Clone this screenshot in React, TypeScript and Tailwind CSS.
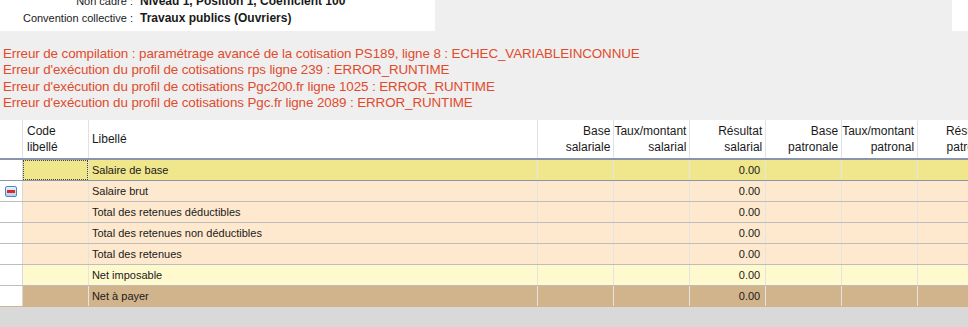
import React from 'react';

type Row = { label: string; bg: string; line: string; value: string };

const rows: Row[] = [
  { label: 'Salaire de base', bg: 'bg-[#f0e68c]', line: 'border-[#8a94ab]', value: '0.00' },
  { label: 'Salaire brut', bg: 'bg-[#fee9cf]', line: 'border-[#bdbdbd]', value: '0.00' },
  { label: 'Total des retenues déductibles', bg: 'bg-[#fee9cf]', line: 'border-[#bdbdbd]', value: '0.00' },
  { label: 'Total des retenues non déductibles', bg: 'bg-[#fee9cf]', line: 'border-[#bdbdbd]', value: '0.00' },
  { label: 'Total des retenues', bg: 'bg-[#fee9cf]', line: 'border-[#bdbdbd]', value: '0.00' },
  { label: 'Net imposable', bg: 'bg-[#fffacd]', line: 'border-[#bdbdbd]', value: '0.00' },
  { label: 'Net à payer', bg: 'bg-[#d2b48c]', line: 'border-[#d2b48c]', value: '0.00' },
];

const errors = [
  'Erreur de compilation : paramétrage avancé de la cotisation PS189, ligne 8 : ECHEC_VARIABLEINCONNUE',
  "Erreur d'exécution du profil de cotisations rps ligne 239 : ERROR_RUNTIME",
  "Erreur d'exécution du profil de cotisations Pgc200.fr ligne 1025 : ERROR_RUNTIME",
  "Erreur d'exécution du profil de cotisations Pgc.fr ligne 2089 : ERROR_RUNTIME",
];

const numHeaders = [
  ['Base', 'salariale'],
  ['Taux/montant', 'salarial'],
  ['Résultat', 'salarial'],
  ['Base', 'patronale'],
  ['Taux/montant', 'patronal'],
  ['Résultat', 'patronal'],
];

function MinusIcon() {
  return (
    <div className="w-[12px] h-[11px] rounded-[2px] border border-[#4f86c9] bg-gradient-to-b from-[#e6f1fc] to-[#b4d1f0] flex items-center justify-center">
      <div className="w-[8px] h-[3px] bg-[#d62b2b]" />
    </div>
  );
}

export default function App() {
  return (
    <div className="w-[968px] h-[327px] overflow-hidden bg-[#efefef] font-['Liberation_Sans',Arial,sans-serif] text-[#1a1a1a]">
      {/* identity panel */}
      <div className="flex justify-between h-[31px]">
        <div className="w-[435px] bg-white overflow-hidden">
          <div className="-mt-[7px] grid grid-cols-[133px_1fr] gap-x-[7px] leading-[17px]">
            <span className="text-right text-[11px]">Non cadre :</span>
            <span className="font-bold text-[12px]">Niveau 1, Position 1, Coefficient 100</span>
            <span className="text-right text-[11px]">Convention collective :</span>
            <span className="font-bold text-[12px]">Travaux publics (Ouvriers)</span>
          </div>
        </div>
        <div className="w-[16px] bg-white" />
      </div>

      {/* errors */}
      <div className="pt-[15px] pl-[3px] text-[13.4px] leading-[16.3px] text-[#e04b2d] tracking-[-0.1px]">
        {errors.map((e) => (
          <div key={e}>{e}</div>
        ))}
      </div>

      {/* grid */}
      <div className="mt-[9px] w-[994px] text-[11px]">
        <div className="flex h-[40px] bg-white border-b-2 border-[#8a94ab] text-[12px] leading-[16px]">
          <div className="w-[23px] border-r border-[#e2e2e2]" />
          <div className="w-[66px] border-r border-[#e2e2e2] pl-[4px] pt-[3px]">
            <div>Code</div>
            <div>libellé</div>
          </div>
          <div className="w-[450px] border-r border-[#e2e2e2] pl-[3px] flex items-center">Libellé</div>
          {numHeaders.map(([a, b], i) => (
            <div key={i} className="w-[76px] border-r border-[#e2e2e2] pr-[3px] pt-[3px] text-right whitespace-nowrap overflow-hidden">
              <div>{a}</div>
              <div>{b}</div>
            </div>
          ))}
        </div>

        {rows.map((r, i) => (
          <div key={r.label} className={`flex h-[21px] leading-[20px] border-b ${r.line}`}>
            <div className="w-[23px] bg-white border-r border-[#d9d9d9] flex items-center justify-center">
              {i === 1 && <MinusIcon />}
            </div>
            <div className={`w-[66px] ${r.bg} border-r border-[#e4e4e4]`}>
              {i === 0 && <div className="h-full border border-dotted border-[#444]" />}
            </div>
            <div className={`w-[450px] ${r.bg} border-r border-[#e4e4e4] pl-[3px]`}>{r.label}</div>
            <div className={`w-[76px] ${r.bg} border-r border-[#e4e4e4]`} />
            <div className={`w-[76px] ${r.bg} border-r border-[#e4e4e4]`} />
            <div className={`w-[76px] ${r.bg} border-r border-[#e4e4e4] text-right pr-[5px]`}>{r.value}</div>
            <div className={`w-[76px] ${r.bg} border-r border-[#e4e4e4]`} />
            <div className={`w-[76px] ${r.bg} border-r border-[#e4e4e4]`} />
            <div className={`w-[76px] ${r.bg} border-r border-[#e4e4e4]`} />
          </div>
        ))}
        <div className="h-[40px] bg-[#d9d9d9]" />
      </div>
    </div>
  );
}
